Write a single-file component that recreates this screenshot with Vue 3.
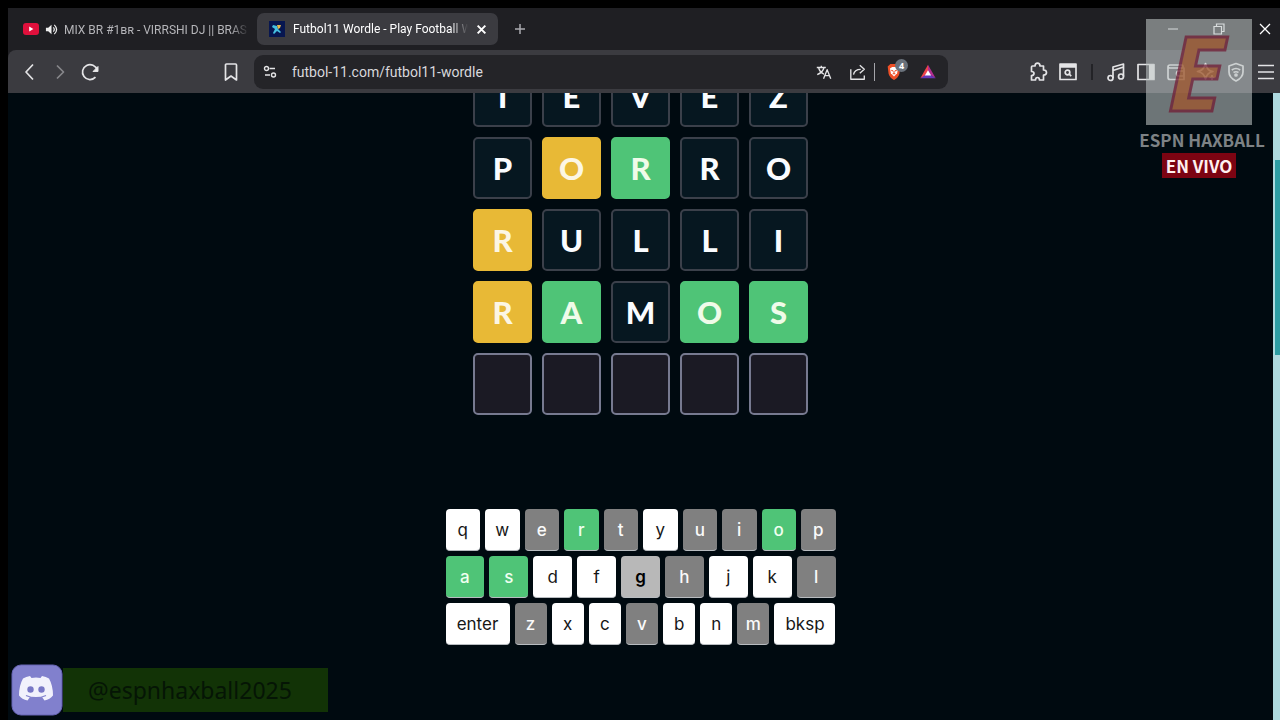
<script setup>
import { ref } from 'vue'

const rows = [
  { word: 'TEVEZ', marks: '-----' },
  { word: 'PORRO', marks: '-yg--' },
  { word: 'RULLI', marks: 'y----' },
  { word: 'RAMOS', marks: 'yg-gg' },
  { word: '     ', marks: 'eeeee' },
]
const tileClass = { '-': 'absent', y: 'present', g: 'correct', e: 'empty' }

const keyboard = [
  ['q', 'w', 'e', 'r', 't', 'y', 'u', 'i', 'o', 'p'],
  ['a', 's', 'd', 'f', 'g', 'h', 'j', 'k', 'l'],
  ['enter', 'z', 'x', 'c', 'v', 'b', 'n', 'm', 'bksp'],
]
const used = 'etuiphlzvm'
const correct = 'roas'
function keyClass(key) {
  if (key.length > 1) return key
  if (key === 'g') return 'pressed'
  if (correct.includes(key)) return 'hit'
  return used.includes(key) ? 'used' : 'free'
}
const address = ref('futbol-11.com/futbol11-wordle')
</script>

<template>
  <div class="screen">
    <div class="browser">
      <header class="tabs">
        <div class="tab">
          <svg class="fav" viewBox="0 0 16 16"><rect y="2" width="16" height="12" rx="3" fill="#e0103c" /><path d="M6.200 5.500v5l4.200-2.500z" fill="#fff" /></svg>
          <svg class="sound" viewBox="0 0 14 14"><path d="M1 5h2.500L7 2v10L3.500 9H1z" fill="#eee" /><path d="M9 4.800q2 2.200 0 4.400M10 2q5 5 0 10" fill="none" stroke="#eee" stroke-width="1.300" /></svg>
          <span class="title">MIX BR #1ʙʀ - VIRRSHI DJ || BRAS</span>
        </div>
        <div class="tab active">
          <svg class="fav" viewBox="0 0 16 16"><rect width="16" height="16" fill="#071650" /><path d="M4 4l4 1 1 3 3 3-1 1-3-2-3 3-1-1 2-4-3-2z" fill="#45bfe0" /><path d="M8 4h4l-1 3-2 1z" fill="#e5b84a" /></svg>
          <span class="title">Futbol11 Wordle - Play Football W</span>
          <button class="close" aria-label="Close tab"><svg viewBox="0 0 10 10"><path d="M1.500 1.500l7 7m0-7l-7 7" stroke="#fff" stroke-width="1.800" /></svg></button>
        </div>
        <button class="plus" aria-label="New tab"><svg viewBox="0 0 12 12"><path d="M6 1v10M1 6h10" stroke="#aaaab0" stroke-width="1.500" /></svg></button>
        <div class="controls">
          <button aria-label="Minimize"><svg viewBox="0 0 12 12"><path d="M1 6h10" stroke="#fff" /></svg></button>
          <button aria-label="Restore"><svg viewBox="0 0 12 12"><path d="M1 3.500h7.500V11H1zM3.500 3.500V1H11v7.500H8.500" fill="none" stroke="#fff" stroke-width="1.200" /></svg></button>
          <button aria-label="Close window"><svg viewBox="0 0 12 12"><path d="M1 1l10 10M11 1L1 11" stroke="#fff" stroke-width="1.300" /></svg></button>
        </div>
      </header>

      <nav class="toolbar">
        <button aria-label="Back"><svg viewBox="0 0 20 20"><path d="M13 2.500L6 10l7 7.500" /></svg></button>
        <button class="dim" aria-label="Forward"><svg viewBox="0 0 20 20"><path d="M7 3.500L13.500 10 7 16.500" /></svg></button>
        <button aria-label="Reload"><svg viewBox="0 0 20 20"><path d="M15.500 15.200a7.500 7.500 0 1 1 1.700-7.200" /><path d="M18 4.500v5h-5z" fill="#eee" stroke-width="1" /></svg></button>
        <span class="gap-left"></span>
        <button aria-label="Bookmark"><svg viewBox="0 0 20 20"><path d="M4.500 3q0-1 1-1h9q1 0 1 1v15L10 14l-5.500 4z" /></svg></button>
        <div class="omnibox">
          <svg class="site" viewBox="0 0 14 14"><circle cx="3.500" cy="3.500" r="2" /><path d="M6.500 3.500H12M2 10h5" /><circle cx="10.500" cy="10" r="2" /></svg>
          <input v-model="address" aria-label="Address" />
          <button aria-label="Translate"><svg viewBox="0 0 20 20"><path d="M2 5h10M7 3v2M10 5q-1 5-7.500 8M4 5q1 5 6 7.500M9.500 17.500l4-10 4 10M11 14h5" /></svg></button>
          <button class="share" aria-label="Share"><svg viewBox="0 0 20 20"><path d="M2 7v11h15v-4M5 13q1-6 8-6M12 2.500l5 4.500-5 4.500" /></svg></button>
          <i class="bar"></i>
          <button class="brave" aria-label="Brave Shields">
            <svg viewBox="0 0 20 20"><path d="M6 1h8l3 3-1 8q-1 4-6 7-5-3-6-7L3 4z" fill="#ef5027" stroke="none" /><path d="M5.500 6L8 4.500h4L14.500 6l-1 5.500L10 15l-3.500-3.500z" fill="#fff" stroke="none" /><path d="M7 8l2 1m4-1l-2 1m-1 0v3m-1.500 0h3" stroke="#ef5027" stroke-width="1.200" /></svg>
            <span class="badge">4</span>
          </button>
          <button aria-label="Rewards"><svg viewBox="0 0 20 20" class="solid"><path d="M10 2L1.500 17 10 13z" fill="#f0444a" /><path d="M10 2l8.500 15L10 12z" fill="#b32d91" /><path d="M1.500 17h17L10 11.500z" fill="#6637b8" /><path d="M10 8l-3.500 6h7z" fill="#fff" /></svg></button>
        </div>
        <span class="gap-right"></span>
        <button aria-label="Extensions"><svg viewBox="0 0 20 20"><path d="M4.500 4H7q0-2.800 2.500-2.800T12 4h3.500v4q3 0 3 2.500T15.500 13v5h-4q0-2.500-2-2.500t-2 2.500h-4v-4.500q2.500 0 2.500-2t-2.500-2V5q0-1 1-1z" /></svg></button>
        <button aria-label="Search tabs"><svg viewBox="0 0 20 20"><path d="M2 2h16v15.500H2zM2 5h16" /><path d="M2 3.500h16" stroke-width="3" /><circle cx="9.500" cy="10.500" r="2.300" /><path d="M11.200 12.200l2 2" /></svg></button>
        <i class="divider"></i>
        <button aria-label="Playlist"><svg viewBox="0 0 20 20"><path d="M7 16V5l10.500-3v12.500M7 8.500L17.500 5" /><circle cx="4.500" cy="16" r="2.500" /><circle cx="15" cy="14.500" r="2.500" /></svg></button>
        <button aria-label="Sidebar"><svg viewBox="0 0 20 20"><path d="M2 2.500h16v15H2z" /><path d="M13 3h5v14h-5z" fill="#eee" stroke="none" /></svg></button>
        <button aria-label="Wallet"><svg viewBox="0 0 20 20"><path d="M17 6V4q0-1-1-1H4Q2 3 2 5v10.500q0 2 2 2h14V6H4Q2 6 2 4.500" /><path d="M18 9h-5q-2.500 0-2.500 2.500T13 14h5z" /></svg></button>
        <button aria-label="Leo AI"><svg viewBox="0 0 20 20"><path d="M9.500 1.500Q11 9 17 9.500q-6 1-7.500 7.500Q8 10.500 1.500 9.500 8 8.500 9.500 1.500zM16 13v5m-2.500-2.500h5" stroke="#fff" /></svg></button>
        <button aria-label="VPN"><svg viewBox="0 0 20 20"><path d="M10 1.500l7 2.500v6q0 5.500-7 9-7-3.500-7-9V4zM5.800 8q4.200-3 8.400 0M7.500 10.500q2.500-1.500 5 0" /><circle cx="10" cy="13" r="1" /></svg></button>
        <button class="menu" aria-label="Menu"><svg viewBox="0 0 20 20"><path d="M2 3.500h16M2 10h16M2 16.500h16" /></svg></button>
      </nav>

      <div class="viewport">
        <main class="game">
          <section class="board" aria-label="Board">
            <div v-for="(row, r) in rows" :key="r" class="row">
              <div v-for="(letter, c) in row.word" :key="c" class="tile" :class="tileClass[row.marks[c]]">{{ letter }}</div>
            </div>
          </section>
          <section class="keyboard" aria-label="Keyboard">
            <div v-for="(keys, k) in keyboard" :key="k" class="keys">
              <button v-for="key in keys" :key="key" class="key" :class="keyClass(key)">{{ key }}</button>
            </div>
          </section>
        </main>
        <div class="scroll"><div class="thumb"></div></div>
      </div>
    </div>

    <aside class="watermark">
      <svg class="logo" viewBox="0 0 106 106">
        <rect width="106" height="106" fill="#bcc2c2" fill-opacity=".58" />
        <text x="50" y="92" text-anchor="middle">E</text>
      </svg>
      <span class="channel">ESPN HAXBALL</span>
      <strong class="live">EN VIVO</strong>
    </aside>

    <aside class="discord">
      <svg viewBox="0 0 52 52">
        <rect x="1" y="1" width="50" height="50" rx="9" fill="#8180cd" stroke="#6765b4" stroke-width="1" />
        <path d="M19 12q-4 .500-7 2.500-4 7-4 17 3 4 8.500 5l2.500-3.500q6 1.500 12 0l2.500 3.500q5.500-1 8.500-5 0-10-4-17-3-2-7-2.500l-1.500 2q-4.500-1-9 0z" fill="#f1f1fc" />
        <circle cx="19.500" cy="25.500" r="3.200" fill="#7877c6" /><circle cx="30.500" cy="25.500" r="3.200" fill="#7877c6" />
        <path d="M15 31.500q10 4.500 20 0" fill="none" stroke="#8180cd" stroke-width="1.300" />
      </svg>
      <span class="handle">@espnhaxball2025</span>
    </aside>
  </div>
</template>

<style>
html, body { margin: 0; background: #000; }
</style>

<style scoped>
* { box-sizing: border-box; }
button { border: 0; padding: 0; margin: 0; background: none; font: inherit; color: inherit; }
svg { display: block; }
.screen { position: relative; min-height: 100vh; padding: 8px 0 0 8px; display: flex; background: #000; font-family: "Open Sans", "Noto Sans", sans-serif; overflow: hidden; }
.browser { flex: 1; min-width: 0; display: flex; flex-direction: column; background: #1f1f23; }

.tabs { height: 42px; display: flex; align-items: center; padding-left: 8px; font: 12px Roboto, "Noto Sans", sans-serif; color: #b5b5b9; }
.tab { width: 241px; height: 32px; padding: 0 8px 0 7px; display: flex; align-items: center; gap: 6px; border-radius: 7px; }
.tab.active { background: #3b3b40; color: #fff; padding: 0 10px 0 12px; gap: 8px; }
.fav { width: 16px; height: 16px; flex: none; }
.sound { width: 13px; height: 13px; flex: none; }
.title { flex: 1; min-width: 0; overflow: hidden; white-space: nowrap; mask-image: linear-gradient(to right, #000 90%, transparent); }
.close { width: 12px; }
.close svg { width: 11px; height: 11px; }
.plus { margin-left: 16px; }
.plus svg { width: 12px; height: 12px; }
.controls { margin-left: auto; display: flex; }
.controls button { width: 46px; display: flex; justify-content: center; }
.controls button:last-child { width: 38px; padding-left: 17px; justify-content: flex-start; }
.controls svg { width: 12px; height: 12px; flex: none; }

.toolbar { height: 43px; display: flex; align-items: center; padding-left: 7px; background: #3b3b40; border-radius: 8px 0 0 0; }
.toolbar button { position: relative; width: 30px; height: 30px; flex: none; display: flex; align-items: center; justify-content: center; }
.toolbar svg { width: 20px; height: 20px; fill: none; stroke: #e4e4e6; stroke-width: 1.7; stroke-linejoin: round; }
.toolbar .solid { stroke: none; }
.toolbar .dim svg { stroke: #86868b; }
.toolbar .menu { width: 29px; }
.gap-left { flex: 111 1 0; }
.gap-right { flex: 75 1 0; }
.omnibox { flex: 681 1 0; min-width: 0; height: 34px; margin-left: 8px; padding: 0 5px 0 9px; display: flex; align-items: center; background: #242428; border-radius: 9px; }
.omnibox .site { width: 14px; height: 14px; flex: none; stroke-width: 1.4; }
.omnibox input { flex: 1; min-width: 0; margin: 0 8px 0 15px; padding: 0; border: 0; outline: 0; background: none; color: #d8d8dc; font: 14px Roboto, "Noto Sans", sans-serif; }
.omnibox svg { width: 18px; height: 18px; stroke-width: 1.5; }
.omnibox .share { margin-left: 4px; }
.bar { width: 1px; height: 18px; margin: 0 4px 0 1px; background: #a5a5aa; }
.badge { position: absolute; top: 2px; right: 1px; width: 13px; height: 13px; border-radius: 7px; background: #69717b; color: #fff; font: 700 9px/13px "Open Sans", sans-serif; text-align: center; }
.omnibox .brave { margin-right: 4px; }
.divider { width: 2px; height: 16px; margin: 0 8px; background: #232327; }

.viewport { flex: 1; display: flex; overflow: hidden; background: #000a10; }
.game { flex: 1; min-width: 0; display: flex; flex-direction: column; align-items: center; }
.board { margin-top: -28px; display: grid; gap: 10px; }
.row { display: flex; gap: 10px; }
.tile { width: 59px; height: 62px; display: flex; align-items: center; justify-content: center; border: 2px solid #3b404a; border-radius: 5px; background: #061720; color: #fafcff; font: 900 31px Lato, sans-serif; }
.tile.present { background: #e8b936; border-color: #e8b936; color: #fcf6e4; }
.tile.correct { background: #4fc477; border-color: #4fc477; color: #effbe9; }
.tile.empty { background: #1b1a24; border-color: #777a90; }
.keyboard { width: 390px; margin-top: 94px; display: grid; gap: 5px; font: 17px Inter, sans-serif; }
.keys { display: flex; gap: 5px; }
.key { flex: 1 1 0; min-width: 0; height: 42px; border-radius: 4px; background: #fff; color: #161616; text-align: center; border-bottom: 1px solid #b8bcc0; }
.key.hit { background: #4fc477; color: #effff0; font-weight: 500; }
.key.used { background: #808080; color: #fafafa; font-weight: 500; }
.key.pressed { background: #b8b8b8; color: #000; font-weight: 600; }
.key.enter { flex: 0 0 64px; }
.key.bksp { flex: 0 0 61px; }
.scroll { width: 7px; padding-left: 2px; background: #add9df; display: flex; }
.thumb { flex: 1; height: 195px; margin-top: 67px; background: #2d9da3; }

.watermark { position: absolute; top: 19px; right: 16px; width: 124px; display: flex; flex-direction: column; align-items: center; font-family: "Noto Sans CJK SC", sans-serif; pointer-events: none; }
.logo { width: 106px; height: 106px; margin-right: 6px; }
.logo text { font: italic 700 104px "Open Sans", sans-serif; fill: #a0562b; stroke: #711c34; stroke-width: 3; opacity: .75; }
.channel { margin-top: 2px; white-space: nowrap; color: #7d8285; font-weight: 700; font-size: 17px; line-height: 26px; }
.live { padding: 0 4px; background: #7c0412; color: #fff0f0; font-size: 17px; line-height: 25px; margin-right: 6px; white-space: nowrap; }
.discord { position: absolute; left: 11px; bottom: 4px; display: flex; align-items: center; }
.discord svg { width: 52px; height: 52px; }
.handle { height: 44px; width: 265px; padding-left: 25px; background: #123306; color: #051505; font: 23px/44px "Noto Sans", sans-serif; }
</style>
